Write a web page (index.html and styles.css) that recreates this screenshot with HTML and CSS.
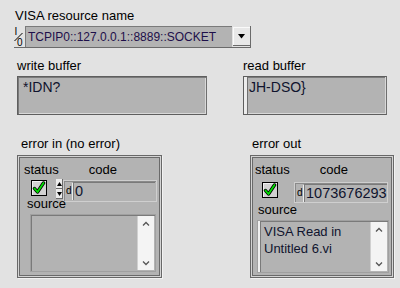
FILE: index.html
```html
<!DOCTYPE html>
<html>
<head>
<meta charset="utf-8">
<link rel="stylesheet" href="styles.css">
</head>
<body>
<div class="panel">
  <section class="visa">
    <div class="lbl">VISA resource name</div>
    <div class="ring">
      <svg class="io" width="10" height="21" viewBox="0 0 10 21">
        <text x="0.5" y="9" class="io-t">I</text>
        <line x1="0.5" y1="15" x2="8.5" y2="7" stroke="#000" stroke-width="1"/>
        <text x="3" y="20" class="io-t">0</text>
      </svg>
      <div class="ring-field">TCPIP0::127.0.0.1::8889::SOCKET</div>
      <div class="ring-btn">
        <svg width="9" height="5" viewBox="0 0 9 5"><path d="M1 0h7L4.5 4.5z" fill="#000"/></svg>
      </div>
    </div>
  </section>

  <div class="row2">
    <section class="write">
      <div class="lbl">write buffer</div>
      <div class="strbox">*IDN?</div>
    </section>
    <section class="read">
      <div class="lbl">read buffer</div>
      <div class="strbox ind">JH-DSO}</div>
    </section>
  </div>

  <div class="row3">
    <section class="errin">
      <div class="lbl elbl">error in (no error)</div>
      <div class="cluster">
        <div class="chead"><span class="st">status</span><span class="cd">code</span></div>
        <div class="cvals">
          <div class="chk"><svg width="14" height="14" viewBox="0 0 14 14"><path d="M2.5 7.5l3 3.5 6-9" fill="none" stroke="#000" stroke-width="3.4" stroke-linejoin="round" stroke-linecap="round"/><path d="M2.5 7.5l3 3.5 6-9" fill="none" stroke="#00e000" stroke-width="1.8" stroke-linejoin="round" stroke-linecap="round"/></svg></div>
          <div class="spin">
            <div class="sb"><svg width="5" height="4" viewBox="0 0 5 4"><path d="M0 4h5L2.5 0z" fill="#000"/></svg></div>
            <div class="sb"><svg width="5" height="4" viewBox="0 0 5 4"><path d="M0 0h5L2.5 4z" fill="#000"/></svg></div>
          </div>
          <div class="num"><span class="radix">d</span><div class="nf">0</div></div>
        </div>
        <div class="slbl">source</div>
        <div class="srcbox">
          <div class="srctext"></div>
          <div class="scroll">
            <svg width="8" height="5" viewBox="0 0 8 5"><path d="M1 4.5l3-3 3 3" fill="none" stroke="#555" stroke-width="1.3"/></svg>
            <svg width="8" height="5" viewBox="0 0 8 5"><path d="M1 0.5l3 3 3-3" fill="none" stroke="#555" stroke-width="1.3"/></svg>
          </div>
        </div>
      </div>
    </section>

    <section class="errout">
      <div class="lbl elbl">error out</div>
      <div class="cluster">
        <div class="chead"><span class="st">status</span><span class="cd">code</span></div>
        <div class="cvals">
          <div class="chk"><svg width="14" height="14" viewBox="0 0 14 14"><path d="M2.5 7.5l3 3.5 6-9" fill="none" stroke="#000" stroke-width="3.4" stroke-linejoin="round" stroke-linecap="round"/><path d="M2.5 7.5l3 3.5 6-9" fill="none" stroke="#00e000" stroke-width="1.8" stroke-linejoin="round" stroke-linecap="round"/></svg></div>
          <div class="num"><span class="radix">d</span><div class="nf">1073676293</div></div>
        </div>
        <div class="slbl">source</div>
        <div class="srcbox ind">
          <div class="srctext">VISA Read in<br>Untitled 6.vi</div>
          <div class="scroll">
            <svg width="8" height="5" viewBox="0 0 8 5"><path d="M1 4.5l3-3 3 3" fill="none" stroke="#555" stroke-width="1.3"/></svg>
            <svg width="8" height="5" viewBox="0 0 8 5"><path d="M1 0.5l3 3 3-3" fill="none" stroke="#555" stroke-width="1.3"/></svg>
          </div>
        </div>
      </div>
    </section>
  </div>
</div>
</body>
</html>
```

FILE: styles.css
```css
* { box-sizing: border-box; }
body {
  margin: 0;
  width: 400px;
  height: 288px;
  overflow: hidden;
  background: #e2e2e2;
  color: #000;
  font: 13px/16px "Liberation Sans", Arial, sans-serif;
}
.panel { padding-top: 8px; }
.lbl { height: 16px; line-height: 16px; white-space: nowrap; }

/* VISA ring */
.visa { margin-left: 14px; }
.visa .lbl { margin-left: 1px; margin-bottom: 2px; }
.ring {
  display: flex;
  width: 237px;
  height: 22px;
  border-right: 1px solid #6a6a6a;
  border-bottom: 1px solid #6a6a6a;
}
.io { flex: none; width: 10px; height: 21px; }
.io-t { font: 10px "Liberation Sans", Arial, sans-serif; fill: #000; }
.ring-field {
  flex: none;
  width: 207px;
  height: 21px;
  margin-left: 1px;
  padding: 2px 0 0 2px;
  background: #b3b3b3;
  border-top: 1px solid #7a7a7a;
  border-left: 1px solid #7a7a7a;
  font-size: 12px;
  line-height: 16px;
  color: #1e0f4a;
  white-space: nowrap;
  overflow: hidden;
}
.ring-btn {
  flex: none;
  width: 18px;
  height: 19px;
  margin: 1px 0 0 1px;
  display: flex;
  align-items: center;
  justify-content: center;
  background: #e8e8e8;
  border-right: 1px solid #6a6a6a;
  border-bottom: 1px solid #6a6a6a;
  box-shadow: inset 1px 1px 0 #fafafa;
}

/* string buffers */
.row2 { display: flex; margin-top: 10px; padding-left: 17px; }
.write { width: 190px; }
.read { width: 144px; margin-left: 36px; }
.row2 .lbl { margin-bottom: 2px; }
.strbox {
  height: 39px;
  padding: 2px 0 0 5px;
  background: #b3b3b3;
  border: 1px solid #5e5e5e;
  border-right-color: #6e6e6e;
  box-shadow: inset 1px 1px 0 #7a7a7a, inset -1px -1px 0 #d8d8d8;
  color: #10142e;
  font-size: 14px;
  white-space: nowrap;
}
.strbox.ind {
  padding-left: 5px;
  box-shadow: inset 3px 0 0 #ececec, inset 4px 0 0 #707070, inset -1px -1px 0 #d8d8d8, inset 0 1px 0 #7a7a7a;
}

/* error clusters */
.row3 { display: flex; margin-top: 21px; padding-left: 17px; }
.errin { width: 145px; }
.errout { width: 144px; margin-left: 88px; }
.elbl { margin-bottom: 3px; }
.errin .elbl { margin-left: 4px; }
.errout .elbl { margin-left: 2px; }
.cluster {
  height: 123px;
  padding: 3px;
  background: #b3b3b3;
  border: 1px solid #686868;
  box-shadow: inset 0 0 0 1px #d4d4d4, inset 0 0 0 2px #6a6a6a, 1px 1px 0 #f2f2f2;
}
.chead { display: flex; height: 16px; margin-top: 3px; white-space: nowrap; }
.errin .st { margin-left: 3px; }
.errout .st { margin-left: 1px; }
.cd { margin-left: 30px; }
.cvals { display: flex; align-items: flex-start; }
.errin .cvals { height: 23px; margin-top: 1px; }
.errout .cvals { height: 24px; margin-top: 1px; }
.chk {
  flex: none;
  width: 16px;
  height: 16px;
  display: flex;
  align-items: center;
  justify-content: center;
  background: #d2d2d2;
  border: 1px solid #000;
  box-shadow: inset 1px 1px 0 #f0f0f0;
}
.errin .chk { margin: 1px 0 0 10px; }
.errout .chk { margin: 3px 0 0 8px; }
.spin {
  flex: none;
  width: 7px;
  height: 20px;
  margin-left: 9px;
  display: flex;
  flex-direction: column;
}
.sb {
  height: 10px;
  display: flex;
  align-items: center;
  justify-content: center;
  background: #ececec;
  border-right: 1px solid #6a6a6a;
  border-bottom: 1px solid #6a6a6a;
}
.num {
  flex: none;
  width: 94px;
  height: 22px;
  display: flex;
  align-items: center;
  padding: 1px 1px 1px 2px;
  background: #b3b3b3;
  border: 1px solid #cfcfcf;
  box-shadow: inset 1px 1px 0 #8a8a8a;
}
.errin .num { margin-top: 1px; }
.errout .num { margin: 3px 0 0 16px; height: 21px; }
.radix { flex: none; width: 5px; font-size: 10px; line-height: 10px; margin-right: 1px; }
.nf {
  flex: 1;
  height: 18px;
  line-height: 17px;
  font-size: 14.5px;
  border-left: 1px solid #ececec;
  border-top: 1px solid #7a7a7a;
  box-shadow: inset 1px 0 0 #7a7a7a;
  padding-left: 2px;
  color: #10142e;
  white-space: nowrap;
}
.slbl { height: 16px; white-space: nowrap; }
.errin .slbl { margin: -6px 0 0 6px; }
.errout .slbl { margin: -1px 0 0 4px; }
.srcbox {
  display: flex;
  background: #b3b3b3;
  border: 1px solid #a0a0a0;
  box-shadow: inset 1px 1px 0 #7a7a7a;
}
.errin .srcbox { width: 126px; height: 58px; margin: 2px 0 0 9px; }
.errout .srcbox { width: 132px; height: 53px; margin: 2px 0 0 3px; }
.srcbox.ind { box-shadow: inset 2px 0 0 #f0f0f0, inset 3px 0 0 #7a7a7a, inset 0 1px 0 #7a7a7a; }
.srctext {
  flex: 1;
  padding: 2px 0 0 6px;
  line-height: 17px;
  color: #10142e;
  white-space: nowrap;
}
.scroll {
  flex: none;
  width: 17px;
  margin: 1px 1px 1px 0;
  display: flex;
  flex-direction: column;
  justify-content: space-between;
  align-items: center;
  padding: 5px 0 4px;
  background: #f4f4f4;
  border-left: 1px solid #d0d0d0;
}
```
